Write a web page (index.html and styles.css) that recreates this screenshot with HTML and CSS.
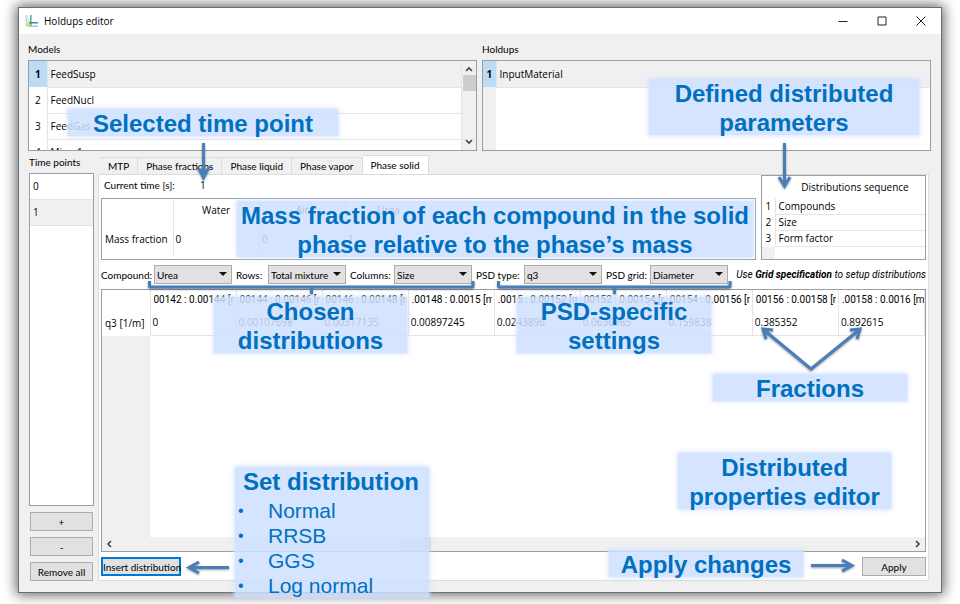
FILE: index.html
```
<!DOCTYPE html>
<html lang="en">
<head>
<meta charset="utf-8">
<title>Holdups editor</title>
<link rel="stylesheet" href="styles.css">
</head>
<body>
<main class="window">
  <header class="titlebar">
    <svg class="app-icon" viewBox="0 0 14 14" aria-hidden="true">
      <path d="M1.500 1v11" stroke="#a9dcd6" stroke-width="1.600"/>
      <path d="M3.500 4v7" stroke="#d9eeb0" stroke-width="1.400"/>
      <path d="M2 9.500h3V13H2z" fill="#ece04a"/>
      <path d="M5.800 1v11" stroke="#4fb3b0" stroke-width="1.600"/>
      <path d="M4 8.800h9" stroke="#2f7fb0" stroke-width="1.400"/>
      <path d="M4 12.200h9" stroke="#8cc9b4" stroke-width="1.200"/>
    </svg>
    <h1 class="title">Holdups editor</h1>
    <div class="window-buttons">
      <button class="window-button" aria-label="Minimize"><svg viewBox="0 0 10 10"><path d="M.5 5.500h9"/></svg></button>
      <button class="window-button" aria-label="Maximize"><svg viewBox="0 0 10 10"><path d="M1 1h8v8H1z"/></svg></button>
      <button class="window-button" aria-label="Close"><svg viewBox="0 0 10 10"><path d="M.5.5l9 9M9.500.5l-9 9"/></svg></button>
    </div>
  </header>

  <section class="top">
    <div class="group">
      <h2 class="label">Models</h2>
      <div class="frame list">
        <table class="rows">
          <tr class="selected"><th>1</th><td>FeedSusp</td></tr>
          <tr><th>2</th><td>FeedNucl</td></tr>
          <tr><th>3</th><td>FeedGas</td></tr>
          <tr><th>4</th><td>Mixer1</td></tr>
        </table>
        <div class="vscroll">
          <svg class="chevron" viewBox="0 0 8 6"><path d="M1 5l3-3 3 3"/></svg>
          <span class="vthumb"></span>
          <svg class="chevron" viewBox="0 0 8 6"><path d="M1 1l3 3 3-3"/></svg>
        </div>
      </div>
    </div>
    <div class="group">
      <h2 class="label">Holdups</h2>
      <div class="frame list holdups">
        <table class="rows narrow">
          <tr class="selected"><th>1</th><td>InputMaterial</td></tr>
        </table>
      </div>
    </div>
  </section>

  <section class="bottom">
    <aside class="times">
      <h2 class="label">Time points</h2>
      <ul class="frame time-list">
        <li>0</li>
        <li class="current">1</li>
      </ul>
      <button class="button">+</button>
      <button class="button">-</button>
      <button class="button">Remove all</button>
    </aside>

    <div class="editor">
      <nav class="tabs" role="tablist">
        <button class="tab" role="tab">MTP</button>
        <button class="tab" role="tab">Phase fractions</button>
        <button class="tab" role="tab">Phase liquid</button>
        <button class="tab" role="tab">Phase vapor</button>
        <button class="tab active" role="tab" aria-selected="true">Phase solid</button>
      </nav>
      <div class="pane">
        <div class="upper">
          <div class="fractions">
            <p class="time"><span class="time-label">Current time [s]:</span><span>1</span></p>
            <div class="frame mass-frame">
              <table class="mass">
                <tr><th class="side"></th><th>Water</th><th>Air</th><th>Urea</th></tr>
                <tr><th class="side">Mass fraction</th><td>0</td><td>0</td><td>1</td></tr>
              </table>
            </div>
          </div>
          <div class="frame sequence-frame">
            <table class="sequence">
              <tr><th></th><th class="head">Distributions sequence</th></tr>
              <tr><th>1</th><td>Compounds</td></tr>
              <tr><th>2</th><td>Size</td></tr>
              <tr><th>3</th><td>Form factor</td></tr>
            </table>
          </div>
        </div>

        <div class="filters">
          <label for="compound">Compound:</label>
          <span class="combo"><select id="compound"><option>Urea</option></select></span>
          <label for="rows">Rows:</label>
          <span class="combo"><select id="rows"><option>Total mixture</option></select></span>
          <label for="columns">Columns:</label>
          <span class="combo"><select id="columns"><option>Size</option></select></span>
          <label for="psd-type">PSD type:</label>
          <span class="combo"><select id="psd-type"><option>q3</option></select></span>
          <label for="psd-grid">PSD grid:</label>
          <span class="combo"><select id="psd-grid"><option>Diameter</option></select></span>
          <p class="note">Use <b>Grid specification</b> to setup distributions</p>
        </div>

        <div class="frame data-frame">
          <table class="data">
            <tr><th class="side"></th><th><span>00142 : 0.00144 [m</span></th><th><span>00144 : 0.00146 [m</span></th><th><span>00146 : 0.00148 [m</span></th><th><span>.00148 : 0.0015 [m</span></th><th><span>.0015 : 0.00152 [m</span></th><th><span>00152 : 0.00154 [m</span></th><th><span>00154 : 0.00156 [m</span></th><th><span>00156 : 0.00158 [m</span></th><th><span>.00158 : 0.0016 [m</span></th></tr>
            <tr><th class="side">q3 [1/m]</th><td>0</td><td>0.00107698</td><td>0.00317135</td><td>0.00897245</td><td>0.0243896</td><td>0.0636985</td><td>0.159838</td><td>0.385352</td><td>0.892615</td></tr>
          </table>
          <div class="empty"></div>
          <div class="hscroll">
            <svg class="chevron side-chevron" viewBox="0 0 6 8"><path d="M5 1L2 4l3 3"/></svg>
            <span class="hthumb"></span>
            <svg class="chevron side-chevron" viewBox="0 0 6 8"><path d="M1 1l3 3-3 3"/></svg>
          </div>
        </div>

        <div class="actions">
          <button class="button insert">Insert distribution</button>
          <button class="button apply">Apply</button>
        </div>
      </div>
    </div>
  </section>
</main>

<div class="notes">
  <p class="callout c-time">Selected time point</p>
  <p class="callout c-params">Defined distributed<br>parameters</p>
  <p class="callout c-mass">Mass fraction of each compound in the solid<br>phase relative to the phase’s mass</p>
  <p class="callout c-chosen">Chosen<br>distributions</p>
  <p class="callout c-psd">PSD-specific<br>settings</p>
  <p class="callout c-fractions">Fractions</p>
  <p class="callout c-editor">Distributed<br>properties editor</p>
  <p class="callout c-apply">Apply changes</p>
  <div class="callout c-set">
    <p>Set distribution</p>
    <ul><li>Normal</li><li>RRSB</li><li>GGS</li><li>Log normal</li></ul>
  </div>
  <svg class="arrows" width="960" height="604" viewBox="0 0 960 604" aria-hidden="true">
    <path d="M203.500 143v28"/>
    <path class="tip" d="M197 167l6.500 13 6.500-13-6.500 4z"/>
    <path d="M784.500 143v42M779 177l5.500 9 5.500-9"/>
    <path d="M149.500 281v5q0 1 1 1H472q1 0 1-1v-5M311.500 287v7"/>
    <path d="M498.500 281v5q0 1 1 1H729q1 0 1-1v-5M614.500 287v7"/>
    <path d="M764 330l47 39 48-39M773 330l-10-1 3 10M850 330l10-1-3 10"/>
    <path d="M229 567.500h-40M199 562l-10 5.500 10 5.500"/>
    <path d="M811 565.500h41M842 560l10 5.500-10 5.500"/>
  </svg>
</div>
</body>
</html>
```
FILE: styles.css
```
* { box-sizing: border-box; }

body {
  margin: 0;
  min-height: 100vh;
  padding: 7px 18px 11px;
  display: flex;
  position: relative;
  overflow: hidden;
  background: #fff;
  color: #000;
  font: 10px/14px "Open Sans", "Noto Sans", sans-serif;
}

h1, h2, p, ul { margin: 0; padding: 0; font: inherit; }
ul { list-style: none; }
button, select { font: inherit; color: inherit; }
table { border-collapse: collapse; table-layout: fixed; }
th, td { padding: 0; font-weight: 400; white-space: nowrap; overflow: hidden; }

.label, .button, .tab, .filters, .time-label { font-family: Lato, "Open Sans", sans-serif; }

.window {
  flex: 1;
  min-width: 0;
  display: flex;
  flex-direction: column;
  background: #f0f0f0;
  border: 1px solid #6e6e6e;
  box-shadow: 0 0 12px 2px rgba(0, 0, 0, .6);
}

.titlebar {
  display: flex;
  align-items: center;
  height: 26px;
  padding: 0 9px 0 6px;
  gap: 5px;
  background: #fff;
}
.app-icon { width: 14px; height: 14px; }
.title { flex: 1; }
.window-buttons { display: flex; gap: 17px; }
.window-button {
  width: 22px;
  height: 22px;
  padding: 6px;
  border: 0;
  background: none;
  display: block;
}
.window-button svg { display: block; width: 10px; height: 10px; fill: none; stroke: #222; }

.top {
  display: grid;
  grid-template-columns: 1fr 1fr;
  gap: 5px;
  padding: 8px 10px 0 9px;
}
.group { display: flex; flex-direction: column; gap: 4px; }
.frame { background: #fff; border: 1px solid #9a9ca6; }
.list { height: 91px; display: flex; overflow: hidden; }
.rows { flex: 1; height: 104px; }
.rows tr { height: 26px; }
.rows th { width: 18px; border-right: 1px solid #e4e4e4; }
.rows td { padding-left: 3px; border-bottom: 1px solid #e4e4e4; }
.rows .selected td { background: #f0f0f0; }
.rows .selected th { background: #bcdcf4; font-weight: 700; }
.rows.narrow { height: 26px; }
.rows.narrow th { width: 13px; }
.holdups { background: linear-gradient(90deg, #f0f0f0 13px, #fff 13px); }
.vscroll {
  width: 15px;
  padding: 5px 0;
  display: flex;
  flex-direction: column;
  align-items: center;
  background: #f0f0f0;
  border-left: 1px solid #e4e4e4;
}
.vthumb { width: 13px; height: 16px; margin: 3px 0 auto; background: #cdcdcd; }
.chevron { width: 8px; height: 6px; fill: none; stroke: #444; stroke-width: 1.600; }
.side-chevron { width: 6px; height: 8px; }

.bottom {
  flex: 1;
  display: grid;
  grid-template-columns: 65px minmax(0, 1fr);
  gap: 4px;
  padding: 4px 12px 11px 10px;
}
.times { display: flex; flex-direction: column; gap: 6px; }
.times .label { height: 12px; white-space: nowrap; }
.time-list { flex: 1; }
.time-list li { height: 26px; padding: 5px 3px; border-bottom: 1px solid #e4e4e4; }
.time-list .current { background: #f0f0f0; }
.button {
  height: 19px;
  padding: 0;
  line-height: 16px;
  border: 1px solid #adadad;
  background: #e1e1e1;
}
.times .button { margin: 0 1px; }

.editor { display: flex; flex-direction: column; }
.tabs { display: flex; align-items: flex-end; height: 19px; padding-left: 2px; }
.tab {
  height: 17px;
  padding: 0 8px;
  line-height: 14px;
  border: 1px solid #dcdcdc;
  border-width: 1px 1px 0 0;
  background: #f0f0f0;
}
.tab.active { height: 19px; background: #fff; }
.pane {
  flex: 1;
  display: flex;
  flex-direction: column;
  gap: 5px;
  padding: 0 2px 4px;
  background: #fff;
  border: 1px solid #dcdcdc;
}
.upper { display: flex; gap: 5px; height: 85px; }
.fractions { flex: 1; display: flex; flex-direction: column; }
.time { display: flex; height: 23px; padding: 3px 3px; }
.time-label { width: 96px; }
.mass-frame { flex: 1; }
.mass { width: 330px; height: 58px; }
.mass th, .mass td, .data th, .data td { border-right: 1px solid #e4e4e4; }
.mass tr:first-child { height: 22px; }
.mass .side { width: 71px; padding-left: 3px; text-align: left; }
.mass td, .data td { padding-left: 2px; }
.sequence-frame { width: 165px; background: linear-gradient(90deg, #f0f0f0 13px, #fff 13px); }
.sequence { width: 100%; background: #fff; }
.sequence tr { height: 16px; }
.sequence tr:first-child { height: 22px; }
.sequence th { width: 13px; }
.sequence th.head { width: auto; padding-left: 10px; }
.sequence td { padding-left: 3px; border: 1px solid #e4e4e4; border-width: 0 0 1px 1px; }

.filters {
  display: grid;
  grid-template-columns: 49px 78px 28px 78px 40px 78px 44px 78px 40px 78px minmax(0, 1fr);
  gap: 4px;
  height: 19px;
  align-items: center;
  white-space: nowrap;
}
.combo { position: relative; display: block; height: 19px; }
.combo select {
  width: 100%;
  height: 100%;
  padding: 0 2px;
  border: 1px solid #adadad;
  border-radius: 0;
  background: #e1e1e1;
  appearance: none;
}
.combo::after {
  content: "";
  position: absolute;
  right: 5px;
  top: 7px;
  border: 4px solid transparent;
  border-top-color: #111;
  border-bottom: 0;
  pointer-events: none;
}
.note { font-family: Roboto, sans-serif; font-style: italic; text-align: right; }

.data-frame { flex: 1; display: flex; flex-direction: column; }
.data { width: 100%; }
.data tr { height: 25px; }
.data tr:first-child { height: 20px; }
.data td { border-bottom: 1px solid #e4e4e4; }
.data .side { width: 48px; padding-left: 3px; text-align: left; }
.data span { display: block; margin: 0 2px 0 3px; overflow: hidden; text-align: left; font-family: Roboto, sans-serif; }
.data th:last-child span { margin-right: 0; }
.empty { flex: 1; background: linear-gradient(90deg, #f0f0f0 48px, #fff 48px); }
.hscroll {
  display: flex;
  justify-content: space-between;
  align-items: center;
  height: 14px;
  padding: 0 4px;
  background: #f0f0f0;
}
.hthumb { width: 32px; height: 14px; margin-right: 198px; background: #dadada; }
.actions { display: flex; justify-content: space-between; }
.insert { width: 80px; border: 2px solid #0078d7; line-height: 14px; white-space: nowrap; }
.apply { width: 64px; }

.notes {
  position: absolute;
  inset: 0;
  pointer-events: none;
  color: #0070c0;
  font: 700 24px/29px "Liberation Sans", sans-serif;
  text-align: center;
  white-space: nowrap;
}
.callout {
  position: absolute;
  background: rgba(207, 224, 255, .85);
  box-shadow: 0 0 4px 1px rgba(207, 224, 255, .85);
}
.c-time { left: 68px; top: 109px; width: 270px; height: 27px; }
.c-params { left: 649px; top: 79px; width: 270px; height: 56px; }
.c-mass { left: 237px; top: 201px; width: 516px; height: 56px; }
.c-chosen { left: 214px; top: 297px; width: 193px; height: 56px; }
.c-psd { left: 517px; top: 297px; width: 194px; height: 56px; }
.c-fractions { left: 713px; top: 374px; width: 194px; height: 27px; }
.c-editor { left: 678px; top: 453px; width: 213px; height: 56px; }
.c-apply { left: 609px; top: 550px; width: 194px; height: 27px; }
.c-set { left: 235px; top: 467px; width: 194px; height: 130px; padding-left: 8px; text-align: left; }
.c-set ul { padding-top: 2px; font-size: 21px; line-height: 25px; font-weight: 400; }
.c-set li { padding-left: 25px; }
.c-set li::before { content: "•"; float: left; margin-left: -30px; font-size: 16px; }
.arrows {
  position: absolute;
  left: 0;
  top: 0;
  fill: none;
  stroke: #4a7ebb;
  stroke-width: 3;
  filter: drop-shadow(0 1px 1px rgba(0, 0, 0, .4));
}
.arrows .tip { fill: #4a7ebb; stroke-width: 1; }
```
